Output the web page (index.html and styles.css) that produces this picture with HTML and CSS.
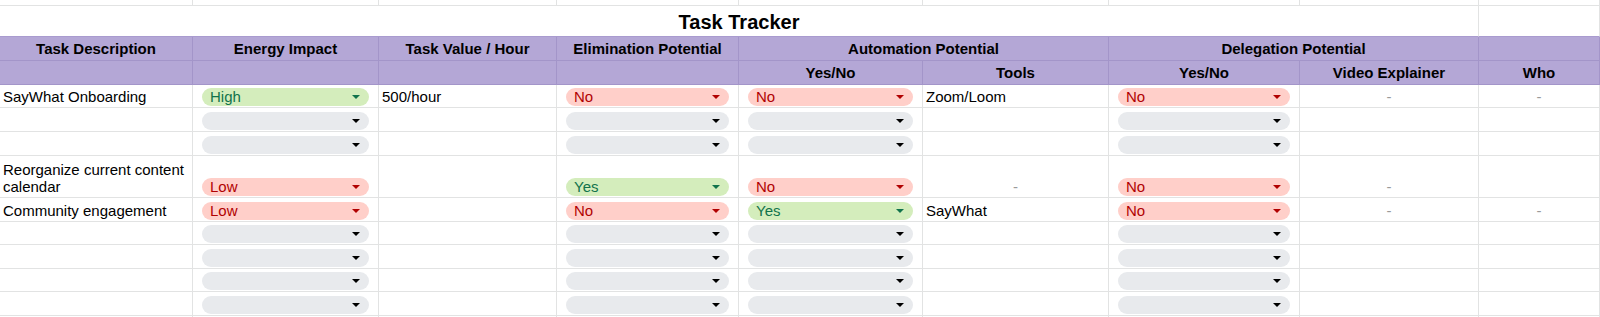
FILE: index.html
```html
<!DOCTYPE html>
<html lang="en">
<head>
<meta charset="utf-8">
<title>Task Tracker</title>
<link rel="stylesheet" href="styles.css">
</head>
<body>
<div class="sheet">
  <!-- top strip -->
  <div class="c"></div><div class="c"></div><div class="c"></div><div class="c"></div><div class="c"></div><div class="c"></div><div class="c"></div><div class="c"></div><div class="c"></div>

  <!-- title -->
  <div class="c title span8">Task Tracker</div>
  <div class="c title-end"></div>

  <!-- header row 1 -->
  <div class="c hd">Task Description</div>
  <div class="c hd">Energy Impact</div>
  <div class="c hd">Task Value / Hour</div>
  <div class="c hd">Elimination Potential</div>
  <div class="c hd span2">Automation Potential</div>
  <div class="c hd span2">Delegation Potential</div>
  <div class="c hd"></div>

  <!-- header row 2 -->
  <div class="c hd"></div>
  <div class="c hd"></div>
  <div class="c hd"></div>
  <div class="c hd"></div>
  <div class="c hd">Yes/No</div>
  <div class="c hd">Tools</div>
  <div class="c hd">Yes/No</div>
  <div class="c hd">Video Explainer</div>
  <div class="c hd">Who</div>

  <!-- row 1 -->
  <div class="c tx">SayWhat Onboarding</div>
  <div class="c ch"><span class="chip g"><span>High</span><i class="arr"></i></span></div>
  <div class="c tx">500/hour</div>
  <div class="c ch"><span class="chip r"><span>No</span><i class="arr"></i></span></div>
  <div class="c ch"><span class="chip r"><span>No</span><i class="arr"></i></span></div>
  <div class="c tx">Zoom/Loom</div>
  <div class="c ch"><span class="chip r"><span>No</span><i class="arr"></i></span></div>
  <div class="c tx dash">-</div>
  <div class="c tx dash">-</div>

  <!-- row 2 -->
  <div class="c tx"></div>
  <div class="c ch"><span class="chip e"><span></span><i class="arr"></i></span></div>
  <div class="c tx"></div>
  <div class="c ch"><span class="chip e"><span></span><i class="arr"></i></span></div>
  <div class="c ch"><span class="chip e"><span></span><i class="arr"></i></span></div>
  <div class="c tx"></div>
  <div class="c ch"><span class="chip e"><span></span><i class="arr"></i></span></div>
  <div class="c tx"></div>
  <div class="c tx"></div>

  <!-- row 3 -->
  <div class="c tx"></div>
  <div class="c ch"><span class="chip e"><span></span><i class="arr"></i></span></div>
  <div class="c tx"></div>
  <div class="c ch"><span class="chip e"><span></span><i class="arr"></i></span></div>
  <div class="c ch"><span class="chip e"><span></span><i class="arr"></i></span></div>
  <div class="c tx"></div>
  <div class="c ch"><span class="chip e"><span></span><i class="arr"></i></span></div>
  <div class="c tx"></div>
  <div class="c tx"></div>

  <!-- row 4 -->
  <div class="c tx wrap">Reorganize current content calendar</div>
  <div class="c ch"><span class="chip r"><span>Low</span><i class="arr"></i></span></div>
  <div class="c tx"></div>
  <div class="c ch"><span class="chip g"><span>Yes</span><i class="arr"></i></span></div>
  <div class="c ch"><span class="chip r"><span>No</span><i class="arr"></i></span></div>
  <div class="c tx dash">-</div>
  <div class="c ch"><span class="chip r"><span>No</span><i class="arr"></i></span></div>
  <div class="c tx dash">-</div>
  <div class="c tx"></div>

  <!-- row 5 -->
  <div class="c tx">Community engagement</div>
  <div class="c ch"><span class="chip r"><span>Low</span><i class="arr"></i></span></div>
  <div class="c tx"></div>
  <div class="c ch"><span class="chip r"><span>No</span><i class="arr"></i></span></div>
  <div class="c ch"><span class="chip g"><span>Yes</span><i class="arr"></i></span></div>
  <div class="c tx">SayWhat</div>
  <div class="c ch"><span class="chip r"><span>No</span><i class="arr"></i></span></div>
  <div class="c tx dash">-</div>
  <div class="c tx dash">-</div>

  <!-- rows 6-9 -->
  <div class="c tx"></div>
  <div class="c ch"><span class="chip e"><span></span><i class="arr"></i></span></div>
  <div class="c tx"></div>
  <div class="c ch"><span class="chip e"><span></span><i class="arr"></i></span></div>
  <div class="c ch"><span class="chip e"><span></span><i class="arr"></i></span></div>
  <div class="c tx"></div>
  <div class="c ch"><span class="chip e"><span></span><i class="arr"></i></span></div>
  <div class="c tx"></div>
  <div class="c tx"></div>

  <div class="c tx"></div>
  <div class="c ch"><span class="chip e"><span></span><i class="arr"></i></span></div>
  <div class="c tx"></div>
  <div class="c ch"><span class="chip e"><span></span><i class="arr"></i></span></div>
  <div class="c ch"><span class="chip e"><span></span><i class="arr"></i></span></div>
  <div class="c tx"></div>
  <div class="c ch"><span class="chip e"><span></span><i class="arr"></i></span></div>
  <div class="c tx"></div>
  <div class="c tx"></div>

  <div class="c tx"></div>
  <div class="c ch"><span class="chip e"><span></span><i class="arr"></i></span></div>
  <div class="c tx"></div>
  <div class="c ch"><span class="chip e"><span></span><i class="arr"></i></span></div>
  <div class="c ch"><span class="chip e"><span></span><i class="arr"></i></span></div>
  <div class="c tx"></div>
  <div class="c ch"><span class="chip e"><span></span><i class="arr"></i></span></div>
  <div class="c tx"></div>
  <div class="c tx"></div>

  <div class="c tx"></div>
  <div class="c ch"><span class="chip e"><span></span><i class="arr"></i></span></div>
  <div class="c tx"></div>
  <div class="c ch"><span class="chip e"><span></span><i class="arr"></i></span></div>
  <div class="c ch"><span class="chip e"><span></span><i class="arr"></i></span></div>
  <div class="c tx"></div>
  <div class="c ch"><span class="chip e"><span></span><i class="arr"></i></span></div>
  <div class="c tx"></div>
  <div class="c tx"></div>

  <!-- partial next row -->
  <div class="c"></div><div class="c"></div><div class="c"></div><div class="c"></div><div class="c"></div><div class="c"></div><div class="c"></div><div class="c"></div><div class="c"></div>
</div>
</body>
</html>
```

FILE: styles.css
```css
html, body {
  margin: 0;
  padding: 0;
  background: #ffffff;
  overflow: hidden;
}

body {
  font-family: "Liberation Sans", Arial, sans-serif;
  font-size: 15px;
  color: #000000;
}

.sheet {
  display: grid;
  width: 1600px;
  grid-template-columns: 193px 186px 178px 182px 184px 186px 191px 179px 121px;
  grid-template-rows: 6px 31px 24px 24px 23px 24px 24px 42px 24px 23px 24px 23px 24px 10px;
}

.c {
  box-sizing: border-box;
  border-right: 1px solid #e2e3e3;
  border-bottom: 1px solid #e2e3e3;
  display: flex;
  align-items: flex-end;
  min-width: 0;
  overflow: hidden;
  white-space: nowrap;
}

.span8 { grid-column: span 8; }
.span2 { grid-column: span 2; }

.title {
  justify-content: center;
  font-weight: bold;
  font-size: 20px;
  padding-bottom: 2px;
  border-bottom-color: #a99bcf;
}

.title-end {
  border-bottom-color: #a99bcf;
}

.hd {
  background: #b4a7d6;
  border-right-color: #a395c9;
  border-bottom-color: #a395c9;
  justify-content: center;
  font-weight: bold;
  padding-bottom: 3px;
  line-height: 17px;
}

.tx {
  padding: 0 3px 2px 3px;
  line-height: 17px;
}

.wrap {
  white-space: normal;
}

.dash {
  justify-content: center;
  color: #9a9a9a;
}

.ch {
  padding: 0 9px 1px 9px;
}

.chip {
  flex: 1;
  height: 18px;
  border-radius: 9px;
  display: flex;
  align-items: center;
  justify-content: space-between;
  padding: 0 9px 0 8px;
  line-height: 18px;
  box-sizing: border-box;
}

.arr {
  width: 0;
  height: 0;
  border-left: 4px solid transparent;
  border-right: 4px solid transparent;
  border-top: 4px solid currentColor;
}

.chip.g {
  background: #d4edbc;
  color: #11734b;
}

.chip.r {
  background: #ffcfc9;
  color: #b10202;
}

.chip.e {
  background: #e8eaed;
  color: #000000;
}
```
